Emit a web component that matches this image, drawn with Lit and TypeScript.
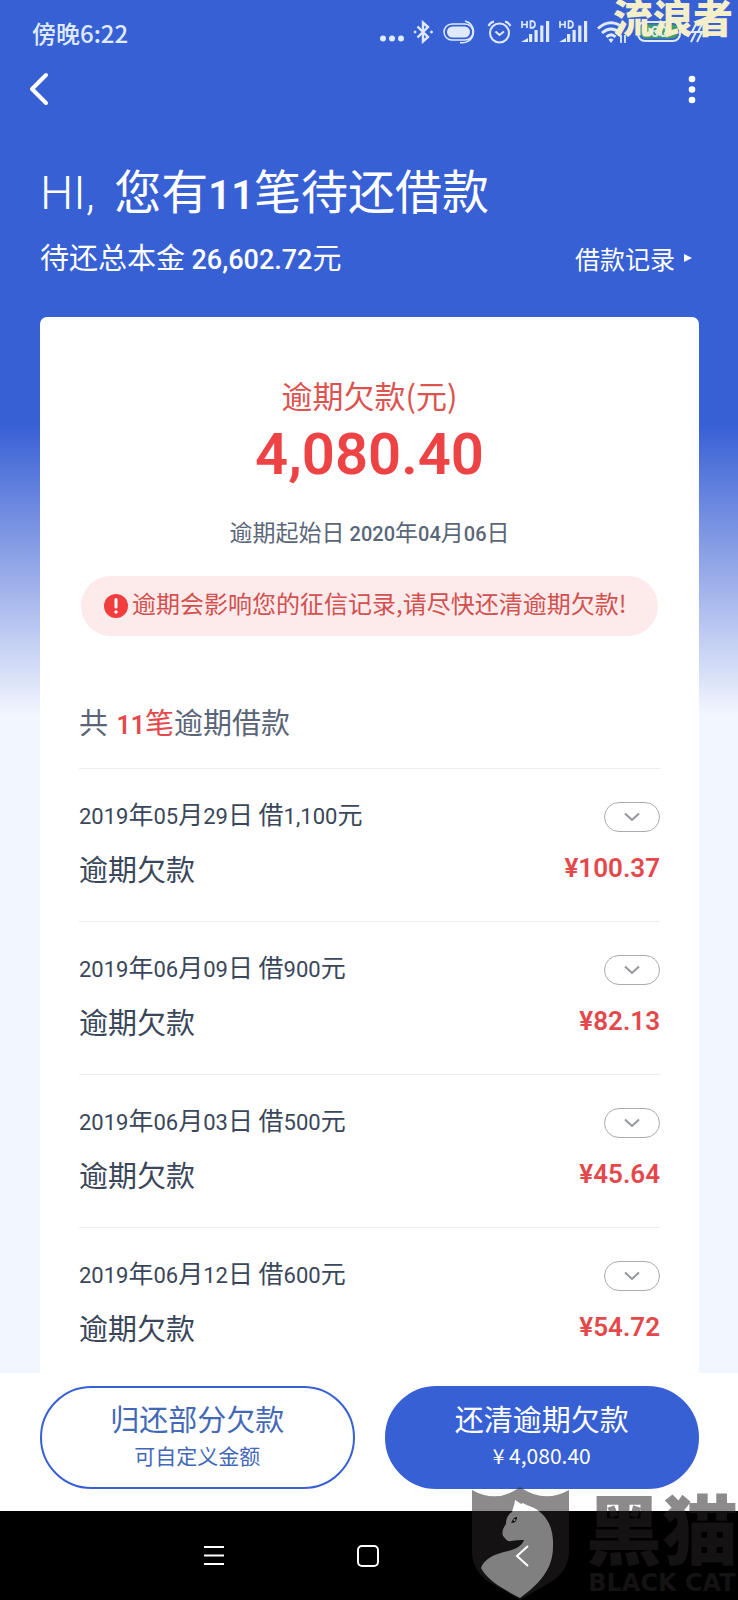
import { LitElement, html, svg, css } from "lit";
import { customElement, property } from "lit/decorators.js";

interface Loan {
  date: string;
  principal: string;
  overdue: string;
}

const LOANS: Loan[] = [
  { date: "2019年05月29日", principal: "1,100", overdue: "100.37" },
  { date: "2019年06月09日", principal: "900", overdue: "82.13" },
  { date: "2019年06月03日", principal: "500", overdue: "45.64" },
  { date: "2019年06月12日", principal: "600", overdue: "54.72" },
];

/** Wraps every run of digits in a span, so that figures take their own face and size. */
const figures = (text: string) =>
  text.split(/([\d,.]+)/).map((part, i) => (i % 2 ? html`<span class="num">${part}</span>` : part));

const signal = svg`
  <path d="M0 22 L7 18 V22 Z M8 14 h3.200 V22 h-3.200 Z M13.500 10 h3.200 V22 h-3.200 Z M19.200 5.500 h3.200 V22 h-3.200 Z M25 1 h3.200 V22 h-3.200 Z" fill="currentColor"/>
  <path d="M1 1 V8 M6 1 V8 M1 4.500 H6 M9.500 1.200 V7.800 H11 Q14 7.800 14 4.500 Q14 1.200 11 1.200 Z" fill="none" stroke="currentColor" stroke-width="1.700"/>`;

@customElement("status-bar")
export class StatusBar extends LitElement {
  static styles = css`
    :host {
      display: flex;
      align-items: center;
      justify-content: space-between;
      height: 64px;
      padding: 0 35px 0 32px;
      color: #dfeaff;
    }
    .time {
      font-size: 24px;
      font-weight: 500;
    }
    .icons {
      display: flex;
      align-items: center;
      gap: 9px;
    }
    svg {
      display: block;
    }
  `;

  render() {
    return html`
      <span class="time">傍晚6:22</span>
      <div class="icons">
        <svg width="24" height="24" viewBox="0 0 24 24" fill="currentColor">
          <circle cx="3" cy="18.500" r="3" /><circle cx="12" cy="18.500" r="3" /><circle cx="21" cy="18.500" r="3" />
        </svg>
        <svg width="21" height="24" viewBox="0 0 21 24" fill="none" stroke="currentColor" stroke-width="2.400">
          <path d="M4.500 6.500 L15 17 L10 21.500 V2.500 L15 7 L4.500 17.500" />
          <circle cx="2" cy="12" r="1" fill="currentColor" stroke-width="1" />
          <circle cx="18.500" cy="12" r="1" fill="currentColor" stroke-width="1" />
        </svg>
        <svg width="35" height="26" viewBox="0 0 35 26" fill="none" stroke="currentColor">
          <rect x="1" y="5" width="29" height="16" rx="8" stroke-width="1.500" />
          <rect x="4" y="7.500" width="23" height="11" rx="5.500" fill="currentColor" stroke="none" />
          <path d="M22 2 A11 11 0 1 1 17 23.500" stroke-width="1.500" />
        </svg>
        <svg width="25" height="26" viewBox="0 0 25 26" fill="none" stroke="currentColor" stroke-width="2">
          <circle cx="12.500" cy="14" r="9.500" />
          <path d="M8.500 12.500 L12.500 16 L17 12.500 M1.500 7 Q3 3.500 7 2.500 M23.500 7 Q22 3.500 18 2.500" />
        </svg>
        <svg width="29" height="24" viewBox="0 0 29 24">${signal}</svg>
        <svg width="29" height="24" viewBox="0 0 29 24">${signal}</svg>
        <svg width="31" height="24" viewBox="0 0 31 24" fill="none" stroke="currentColor" stroke-width="2.800">
          <path d="M1 8.500 Q14 -3 27 8.500 M5 13 Q14 5 23 13 M9.500 17 Q14 12.500 18.500 17" />
          <path d="M11.500 19.500 Q14 17.500 16.500 19.500 L14 23 Z" fill="currentColor" stroke="none" />
          <path d="M24 15 V23 M28 23 V15" stroke-width="1.800" />
        </svg>
        <svg width="44" height="24" viewBox="0 0 44 24">
          <rect x="1" y="2" width="42" height="19" rx="7" fill="none" stroke="currentColor" stroke-width="2" />
          <rect x="3.500" y="4.500" width="37" height="14" rx="5" fill="#3f9d62" />
          <text x="22" y="17" text-anchor="middle" font-size="15" font-weight="700" fill="currentColor">60</text>
        </svg>
        <svg width="13" height="24" viewBox="0 0 13 24" fill="none" stroke="currentColor" stroke-width="2">
          <path d="M7 2 L2 12 H6 L1 22 M13 2 L8 12 H12 L7 22" />
        </svg>
      </div>
    `;
  }
}

@customElement("loan-item")
export class LoanItem extends LitElement {
  @property({ attribute: false }) loan!: Loan;

  static styles = css`
    :host {
      display: flex;
      flex-direction: column;
      gap: 9px;
      height: 153px;
      box-sizing: border-box;
      padding-top: 24px;
      border-top: 1px solid #ebedf0;
      color: #3a4659;
    }
    .line {
      display: flex;
      align-items: center;
      justify-content: space-between;
      line-height: 44px;
    }
    .line.head {
      align-items: flex-start;
    }
    .info {
      font-size: 25px;
      line-height: 40px;
    }
    .num {
      font-family: "Roboto", sans-serif;
      font-size: 22px;
    }
    .label {
      font-size: 29px;
    }
    .amount {
      font-family: "Roboto", sans-serif;
      font-size: 26px;
      font-weight: 600;
      color: #e5484b;
    }
    .toggle {
      display: grid;
      place-items: center;
      width: 56px;
      height: 30px;
      margin-top: 9px;
      padding: 0;
      border: 1px solid #a9abb0;
      border-radius: 15px;
      background: none;
      color: #94979d;
    }
  `;

  render() {
    const { date, principal, overdue } = this.loan;
    return html`
      <div class="line head">
        <span class="info">${figures(`${date} 借${principal}元`)}</span>
        <button class="toggle" aria-label="展开">
          <svg width="18" height="10" viewBox="0 0 18 10" fill="none" stroke="currentColor" stroke-width="2">
            <path d="M2 1.500 L9 8 L16 1.500" />
          </svg>
        </button>
      </div>
      <div class="line">
        <span class="label">逾期欠款</span>
        <span class="amount">¥${overdue}</span>
      </div>
    `;
  }
}

@customElement("black-cat-mark")
export class BlackCatMark extends LitElement {
  static styles = css`
    :host {
      display: flex;
      gap: 17px;
      color: rgba(38, 34, 36, 0.53);
      pointer-events: none;
    }
    .words {
      display: flex;
      flex-direction: column;
      align-items: center;
    }
    .name {
      font-size: 76px;
      font-weight: 900;
      line-height: 80px;
    }
    .latin {
      font-family: "DejaVu Sans", sans-serif;
      font-size: 24px;
      font-weight: 700;
      line-height: 34px;
      white-space: nowrap;
    }
  `;

  render() {
    return html`
      <svg width="97" height="114" viewBox="0 0 97 114">
        <path
          fill="currentColor"
          fill-rule="evenodd"
          d="M0 4 Q25 18 48 1 Q72 18 97 4 V66 Q97 82 82 94 L48 114 L14 94 Q0 82 0 66 Z
             M43 14 C43 18 41 22 40 26 C35 29 34 34 34 38 C30 43 30 47 31 50 C34 53 35 56 39 55 C44 54 49 54 52 54 C50 60 44 63 36 65 C22 68 12 73 9 82 C15 94 31 103 48 112 C66 99 81 84 81 61 C82 42 75 29 62 22 C57 20 52 18 51 17 L49 18 Z"
        />
        <path
          fill="#fff"
          fill-opacity="0.5"
          d="M43 14 C43 18 41 22 40 26 C35 29 34 34 34 38 C30 43 30 47 31 50 C34 53 35 56 39 55 C44 54 49 54 52 54 C50 60 44 63 36 65 C22 68 12 73 9 82 C15 94 31 103 48 112 C66 99 81 84 81 61 C82 42 75 29 62 22 C57 20 52 18 51 17 L49 18 Z"
        />
        <path fill="#151213" d="M39 37 Q42 30 45 31 Q45 37 39 37 Z" />
        <circle cx="42.500" cy="34" r="1" fill="#999" />
      </svg>
      <div class="words">
        <span class="name">黑猫</span>
        <span class="latin">BLACK CAT</span>
      </div>
    `;
  }
}

@customElement("app-root")
export class AppRoot extends LitElement {
  static styles = css`
    :host {
      position: relative;
      display: flex;
      flex-direction: column;
      height: 100vh;
      overflow: hidden;
      background: linear-gradient(#3860d5 425px, #9caeea 580px, #f2f6fe 715px);
      color: #fff;
      font-family: "Noto Sans CJK SC", sans-serif;
    }
    * {
      box-sizing: border-box;
    }
    h1,
    h2,
    p {
      margin: 0;
      font-weight: 400;
    }
    button {
      font-family: inherit;
    }
    .bare {
      display: grid;
      place-items: center;
      padding: 0;
      border: 0;
      background: none;
      color: inherit;
    }
    .topbar {
      display: flex;
      align-items: center;
      justify-content: space-between;
      height: 50px;
      padding: 0 36px 0 28px;
    }
    .scroll {
      flex: 1;
      min-height: 0;
      padding: 0 39px 0 40px;
      overflow-y: auto;
      scrollbar-width: none;
    }
    .num {
      font-family: "Roboto", sans-serif;
      font-weight: 500;
    }
    .title {
      padding-top: 40px;
      font-size: 47px;
      line-height: 70px;
    }
    .title .num {
      font-size: 40px;
      font-weight: 600;
    }
    .hi {
      padding-right: 8px;
      font-family: "Roboto", sans-serif;
      font-weight: 300;
    }
    .summary {
      display: flex;
      align-items: baseline;
      justify-content: space-between;
      height: 56px;
      padding-right: 7px;
      font-size: 29px;
      line-height: 50px;
    }
    .summary .num {
      font-size: 27px;
    }
    .records {
      display: flex;
      align-items: center;
      gap: 9px;
      color: inherit;
      font-size: 25px;
      text-decoration: none;
    }
    .card {
      margin-top: 30px;
      padding: 54px 39px 20px;
      border-radius: 7px;
      background: #fff;
    }
    .due {
      display: flex;
      flex-direction: column;
      align-items: center;
    }
    .due-label {
      color: #dc5350;
      font-size: 31px;
      line-height: 48px;
    }
    .due-amount {
      color: #ee4344;
      font-family: "Roboto", sans-serif;
      font-size: 58px;
      font-weight: 600;
      line-height: 70px;
    }
    .due-date {
      padding-top: 25px;
      color: #5b6678;
      font-size: 23px;
      line-height: 34px;
    }
    .due-date .num {
      font-size: 20px;
    }
    .warning {
      display: flex;
      align-items: center;
      gap: 4px;
      height: 60px;
      margin: 25px 2px 0;
      padding-left: 23px;
      border-radius: 30px;
      background: #fdeaea;
      color: #d2504f;
      font-size: 24px;
      white-space: nowrap;
    }
    .warning-text {
      padding-bottom: 8px;
    }
    .count {
      padding: 63px 0 20px;
      color: #5a6578;
      font-size: 29px;
      line-height: 44px;
    }
    .count .num {
      font-size: 25px;
      font-weight: 600;
    }
    .red {
      padding-left: 2px;
      color: #e5484b;
    }
    .actions {
      display: grid;
      grid-template-columns: 1fr 1fr;
      gap: 30px;
      padding: 13px 39px 22px 40px;
      background: #fff;
    }
    .action {
      display: flex;
      flex-direction: column;
      align-items: center;
      justify-content: center;
      height: 103px;
      padding: 0 0 6px;
      border: 2px solid #3860d5;
      border-radius: 52px;
      background: #fff;
      color: #4468b8;
      font-size: 29px;
      line-height: 40px;
    }
    .action.primary {
      background: #3860d5;
      color: #fff;
    }
    .small {
      font-size: 21px;
      line-height: 34px;
    }
    .nav {
      display: flex;
      align-items: center;
      justify-content: center;
      gap: 130px;
      height: 89px;
      padding-right: 3px;
      background: #000;
    }
    .user-mark {
      position: absolute;
      top: -14px;
      right: 5px;
      color: #f4efc9;
      font-size: 40px;
      font-weight: 900;
      line-height: 60px;
    }
    .brand-mark {
      position: absolute;
      right: 0;
      bottom: 0;
    }
  `;

  render() {
    return html`
      <status-bar></status-bar>
      <header class="topbar">
        <button class="bare" aria-label="返回">
          <svg width="22" height="36" viewBox="0 0 22 36" fill="none" stroke="currentColor" stroke-width="4" stroke-linecap="round" stroke-linejoin="round">
            <path d="M18 4 L4 18 L18 32" />
          </svg>
        </button>
        <button class="bare" aria-label="更多">
          <svg width="20" height="32" viewBox="0 0 20 32" fill="currentColor">
            <circle cx="10" cy="6" r="3.300" /><circle cx="10" cy="16.500" r="3.300" /><circle cx="10" cy="27" r="3.300" />
          </svg>
        </button>
      </header>
      <main class="scroll">
        <h1 class="title"><span class="hi">HI, </span>${figures("您有11笔待还借款")}</h1>
        <div class="summary">
          <p>${figures("待还总本金 26,602.72元")}</p>
          <a class="records" href="#records">
            借款记录
            <svg width="8" height="10" viewBox="0 0 8 10" fill="currentColor"><path d="M0 1 L8 5 L0 9 Z" /></svg>
          </a>
        </div>
        <section class="card">
          <div class="due">
            <p class="due-label">逾期欠款(元)</p>
            <p class="due-amount">4,080.40</p>
            <p class="due-date">${figures("逾期起始日 2020年04月06日")}</p>
          </div>
          <p class="warning">
            <svg width="24" height="24" viewBox="0 0 24 24">
              <circle cx="12" cy="12" r="12" fill="#f23c3e" />
              <path d="M12 5.500 V13" stroke="#fff" stroke-width="3" stroke-linecap="round" />
              <circle cx="12" cy="18" r="1.700" fill="#fff" />
            </svg>
            <span class="warning-text">逾期会影响您的征信记录,请尽快还清逾期欠款!</span>
          </p>
          <h2 class="count">共 <span class="red">${figures("11笔")}</span>逾期借款</h2>
          ${LOANS.map((loan) => html`<loan-item .loan=${loan}></loan-item>`)}
        </section>
      </main>
      <footer class="actions">
        <button class="action">归还部分欠款<span class="small">可自定义金额</span></button>
        <button class="action primary">还清逾期欠款<span class="small">¥ 4,080.40</span></button>
      </footer>
      <nav class="nav">
        <button class="bare" aria-label="最近任务">
          <svg width="24" height="24" viewBox="0 0 24 24" stroke="#fff" stroke-width="2"><path d="M2 3 H22 M2 11.500 H22 M2 20 H22" /></svg>
        </button>
        <button class="bare" aria-label="主屏幕">
          <svg width="24" height="24" viewBox="0 0 24 24" fill="none" stroke="#fff" stroke-width="2"><rect x="2" y="2" width="20" height="20" rx="4" /></svg>
        </button>
        <button class="bare" aria-label="后退">
          <svg width="24" height="24" viewBox="0 0 24 24" fill="none" stroke="#fff" stroke-width="2"><path d="M18 2 L7 12 L18 22" /></svg>
        </button>
      </nav>
      <div class="user-mark">流浪者</div>
      <black-cat-mark class="brand-mark"></black-cat-mark>
    `;
  }
}
